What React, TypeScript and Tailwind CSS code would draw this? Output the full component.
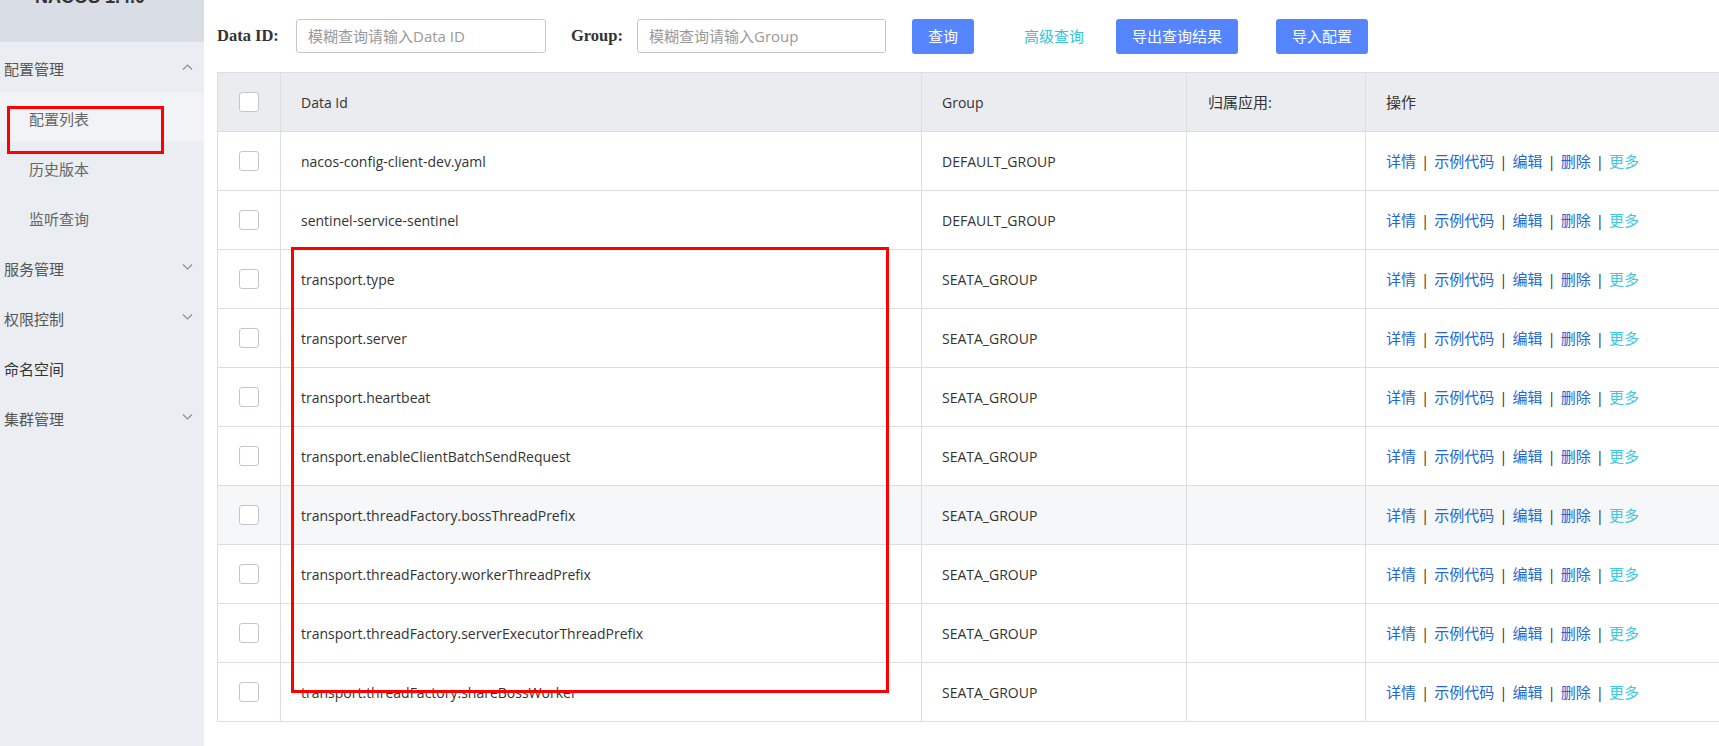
import React from 'react';

const cjk = '"Open Sans", "Noto Sans CJK SC", sans-serif';

const menu = [
  { label: '配置管理', level: 0, arrow: 'up' },
  { label: '配置列表', level: 1, active: true },
  { label: '历史版本', level: 1 },
  { label: '监听查询', level: 1 },
  { label: '服务管理', level: 0, arrow: 'down' },
  { label: '权限控制', level: 0, arrow: 'down' },
  { label: '命名空间', level: 0 },
  { label: '集群管理', level: 0, arrow: 'down' },
];

const rows = [
  { id: 'nacos-config-client-dev.yaml', group: 'DEFAULT_GROUP' },
  { id: 'sentinel-service-sentinel', group: 'DEFAULT_GROUP' },
  { id: 'transport.type', group: 'SEATA_GROUP' },
  { id: 'transport.server', group: 'SEATA_GROUP' },
  { id: 'transport.heartbeat', group: 'SEATA_GROUP' },
  { id: 'transport.enableClientBatchSendRequest', group: 'SEATA_GROUP' },
  { id: 'transport.threadFactory.bossThreadPrefix', group: 'SEATA_GROUP', hover: true },
  { id: 'transport.threadFactory.workerThreadPrefix', group: 'SEATA_GROUP' },
  { id: 'transport.threadFactory.serverExecutorThreadPrefix', group: 'SEATA_GROUP' },
  { id: 'transport.threadFactory.shareBossWorker', group: 'SEATA_GROUP' },
];

function Chevron({ dir }: { dir: string }) {
  return (
    <svg width="11" height="7" viewBox="0 0 11 7" className="absolute left-[182px] top-1/2 -translate-y-1/2">
      {dir === 'up' ? (
        <polyline points="1,6 5.5,1.5 10,6" fill="none" stroke="#8a8d94" strokeWidth="1.1" />
      ) : (
        <polyline points="1,1 5.5,5.5 10,1" fill="none" stroke="#8a8d94" strokeWidth="1.1" />
      )}
    </svg>
  );
}

function Checkbox() {
  return <div className="w-[20px] h-[20px] rounded-[3px] border border-[#c4c6cf] bg-white" />;
}

function Actions() {
  const sep = <span className="mx-[5px] text-[#333]">|</span>;
  return (
    <div className="flex items-center text-[15px]" style={{ fontFamily: cjk }}>
      <span className="text-[#2466d6]">详情</span>
      {sep}
      <span className="text-[#2466d6]">示例代码</span>
      {sep}
      <span className="text-[#2466d6]">编辑</span>
      {sep}
      <span className="text-[#2466d6]">删除</span>
      {sep}
      <span className="text-[#3fc9df]">更多</span>
    </div>
  );
}

const cols = 'grid grid-cols-[63px_641px_265px_179px_1fr]';

export default function App() {
  return (
    <div className="relative flex h-[746px] w-[1719px] overflow-hidden bg-white" style={{ fontFamily: cjk }}>
      {/* sidebar */}
      <div className="w-[204px] shrink-0 bg-[#eaedf1]">
        <div className="h-[42px] bg-[#d9dde5] overflow-hidden">
          <div
            className="-mt-[12px] pl-[35px] text-[18px] leading-[18px] font-bold text-[#333]"
            style={{ fontFamily: '"Liberation Sans", sans-serif' }}
          >
            NACOS 1.4.0
          </div>
        </div>
        {menu.map((m) => (
          <div
            key={m.label}
            className={`relative h-[50px] flex items-center pt-[5px] text-[15px] ${
              m.active ? 'bg-[#f2f3f7]' : ''
            } ${m.level === 1 ? 'pl-[29px] text-[#666]' : 'pl-[4px]'} ${
              m.level === 0 && m.arrow ? 'text-[#555]' : m.level === 0 ? 'text-[#333]' : ''
            }`}
          >
            {m.label}
            {m.arrow && <Chevron dir={m.arrow} />}
          </div>
        ))}
      </div>

      {/* main */}
      <div className="flex-1 pl-[13px]">
        <div className="h-[72px] flex items-center">
          <div
            className="w-[79px] text-[16.5px] font-bold text-[#333]"
            style={{ fontFamily: '"Liberation Serif", serif' }}
          >
            Data ID:
          </div>
          <div className="w-[250px] h-[34px] rounded-[3px] border border-[#c4c6cf] flex items-center pl-[11px] text-[15px] text-[#999]">
            模糊查询请输入Data ID
          </div>
          <div
            className="ml-[25px] w-[66px] text-[16.5px] font-bold text-[#333]"
            style={{ fontFamily: '"Liberation Serif", serif' }}
          >
            Group:
          </div>
          <div className="w-[249px] h-[34px] rounded-[3px] border border-[#c4c6cf] flex items-center pl-[11px] text-[15px] text-[#999]">
            模糊查询请输入Group
          </div>
          <div className="ml-[26px] w-[62px] h-[35px] rounded-[3px] bg-[#5584ff] text-white text-[15px] flex items-center justify-center">
            查询
          </div>
          <div className="ml-[50px] w-[60px] text-[15px] text-[#33c3dc]">高级查询</div>
          <div className="ml-[32px] w-[122px] h-[35px] rounded-[3px] bg-[#5584ff] text-white text-[15px] flex items-center justify-center">
            导出查询结果
          </div>
          <div className="ml-[38px] w-[92px] h-[35px] rounded-[3px] bg-[#5584ff] text-white text-[15px] flex items-center justify-center">
            导入配置
          </div>
        </div>

        {/* table */}
        <div className="border-t border-l border-[#dcdee3] text-[14px] text-[#333]">
          <div className={`${cols} h-[59px] bg-[#ebecf0] border-b border-[#dcdee3]`}>
            <div className="border-r border-[#dcdee3] flex items-center justify-center">
              <Checkbox />
            </div>
            <div className="border-r border-[#dcdee3] flex items-center pl-[20px]">Data Id</div>
            <div className="border-r border-[#dcdee3] flex items-center pl-[20px]">Group</div>
            <div className="border-r border-[#dcdee3] flex items-center pl-[21px] text-[15px]">归属应用:</div>
            <div className="flex items-center pl-[20px] text-[15px]">操作</div>
          </div>
          {rows.map((r) => (
            <div
              key={r.id}
              className={`${cols} h-[59px] border-b border-[#dcdee3] ${r.hover ? 'bg-[#f6f7f9]' : 'bg-white'}`}
            >
              <div className="border-r border-[#dcdee3] flex items-center justify-center">
                <Checkbox />
              </div>
              <div className="border-r border-[#dcdee3] flex items-center pl-[20px]">{r.id}</div>
              <div className="border-r border-[#dcdee3] flex items-center pl-[20px]">{r.group}</div>
              <div className="border-r border-[#dcdee3]" />
              <div className="flex items-center pl-[20px]">
                <Actions />
              </div>
            </div>
          ))}
        </div>
      </div>

      {/* annotation boxes */}
      <div className="absolute left-[7px] top-[106px] w-[157px] h-[48px] border-[3px] border-[#ff0000]" />
      <div className="absolute left-[291px] top-[247px] w-[598px] h-[446px] border-[3px] border-[#ff0000]" />
    </div>
  );
}
